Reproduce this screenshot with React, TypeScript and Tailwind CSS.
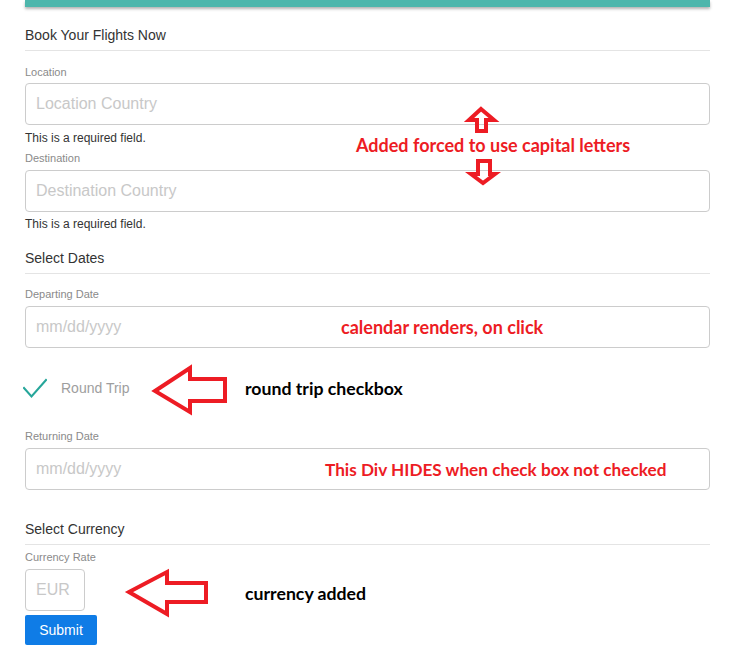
import React from "react";

const Label = ({ children, className = "" }: { children: React.ReactNode; className?: string }) => (
	<div className={`text-[11px] leading-[14px] text-[#8a8a8a] ${className}`}>{children}</div>
);

const Field = ({ placeholder, className = "" }: { placeholder: string; className?: string }) => (
	<input
		type="text"
		placeholder={placeholder}
		className={`block h-[42px] w-full rounded-[4px] border border-[#cccccc] bg-white px-[10px] text-[16px] text-[#333] outline-none placeholder:text-[#c8c8c8] ${className}`}
	/>
);

const Section = ({ children, className = "" }: { children: React.ReactNode; className?: string }) => (
	<div className={`border-b border-[#e4e4e4] pb-[5px] text-[14px] leading-[20px] text-[#333] ${className}`}>
		{children}
	</div>
);

const Required = ({ className = "" }: { className?: string }) => (
	<div className={`text-[12px] leading-[16px] text-[#333] ${className}`}>This is a required field.</div>
);

// red paint-style notes laid over the form
const Note = ({ children, className = "" }: { children: React.ReactNode; className?: string }) => (
	<div className={`absolute whitespace-nowrap font-['Lato',sans-serif] font-bold leading-[20px] ${className}`}>
		{children}
	</div>
);

export default function App() {
	return (
		<div className="relative h-[653px] w-[739px] overflow-hidden bg-white font-['Liberation_Sans',Arial,sans-serif]">
			<div className="ml-[25px] flex w-[685px] flex-col">
				<div className="h-[7px] bg-[#4db6ac] shadow-[0_2px_3px_rgba(0,0,0,0.3)]" />

				<Section className="mt-[18px]">Book Your Flights Now</Section>

				<Label className="mt-[14px]">Location</Label>
				<Field placeholder="Location Country" className="mt-[4px]" />
				<Required className="mt-[5px]" />

				<Label className="mt-[5px]">Destination</Label>
				<Field placeholder="Destination Country" className="mt-[5px]" />
				<Required className="mt-[4px]" />

				<Section className="mt-[16px]">Select Dates</Section>

				<Label className="mt-[13px]">Departing Date</Label>
				<Field placeholder="mm/dd/yyyy" className="mt-[5px]" />

				<div className="ml-[-2px] mt-[30px] flex h-[20px] items-center">
					<svg width="24" height="20" viewBox="0 0 24 20" fill="none">
						<polyline points="1,10 8.5,18.5 23,2" stroke="#26a69a" strokeWidth="2" strokeLinecap="square" />
					</svg>
					<span className="ml-[14px] text-[14px] text-[#9e9e9e]">Round Trip</span>
				</div>

				<Label className="mt-[31px]">Returning Date</Label>
				<Field placeholder="mm/dd/yyyy" className="mt-[5px]" />

				<Section className="mt-[29px]">Select Currency</Section>

				<Label className="mt-[5px]">Currency Rate</Label>
				<Field placeholder="EUR" className="mt-[5px] !w-[60px]" />

				<button className="mt-[4px] h-[30px] w-[72px] rounded-[2px] bg-[#0f7ce6] text-[14px] text-white">
					Submit
				</button>
			</div>

			<svg className="pointer-events-none absolute left-0 top-0" width="739" height="653" fill="none">
				<g stroke="#ed1c24" strokeWidth="4" strokeLinejoin="miter">
					<polygon points="481,109 494,120 486,120 486,131 477,131 477,120 469,120" />
					<polygon points="478,161 490,161 490,174 495,174 483,183 471,174 478,174" />
					<polygon points="155,391 190,368 190,379 225,379 225,401 190,401 190,412" />
					<polygon points="129,592 167,572 167,583 206,583 206,602 167,602 167,614" />
				</g>
			</svg>

			<Note className="left-[356px] top-[135px] text-[18px] text-[#ed1c24]">Added forced to use capital letters</Note>
			<Note className="left-[341px] top-[317px] text-[18px] text-[#ed1c24]">calendar renders, on click</Note>
			<Note className="left-[245px] top-[379px] text-[17.7px] text-black">round trip checkbox</Note>
			<Note className="left-[325px] top-[460px] text-[17.2px] text-[#ed1c24]">
				This Div HIDES when check box not checked
			</Note>
			<Note className="left-[245px] top-[584px] text-[17.7px] text-black">currency added</Note>
		</div>
	);
}
